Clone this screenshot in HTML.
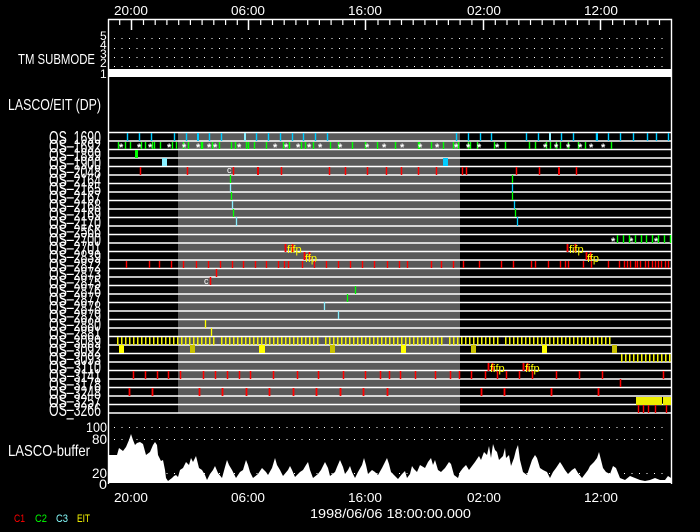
<!DOCTYPE html>
<html><head><meta charset="utf-8"><style>
html,body{margin:0;padding:0;background:#000;width:700px;height:532px;overflow:hidden}
svg{display:block}
text{font-family:"Liberation Sans",sans-serif;fill:#fff}
</style></head><body>
<svg width="700" height="532" viewBox="0 0 700 532" xmlns="http://www.w3.org/2000/svg">
<defs>
<pattern id="yt" x="117" y="0" width="4" height="10" patternUnits="userSpaceOnUse"><rect x="0" y="0" width="1.5" height="10" fill="#f0f000"/></pattern>
</defs>
<rect x="178" y="132" width="282" height="281" fill="#5a5a5a"/>
<path d="M108 19.5H671.5V484M108.5 19V484" stroke="#fff" stroke-width="1.4" fill="none"/>
<g stroke="#fff" stroke-width="1.2">
<path d="M119.7 20v5M143.5 20v5M155.2 20v5M166.9 20v5M178.7 20v5M190.4 20v5M202.1 20v5M213.8 20v5M225.6 20v5M237.3 20v5M260.7 20v5M272.5 20v5M284.2 20v5M295.9 20v5M307.7 20v5M319.4 20v5M331.1 20v5M342.8 20v5M354.6 20v5M378 20v5M389.8 20v5M401.5 20v5M413.2 20v5M424.9 20v5M436.7 20v5M448.4 20v5M460.1 20v5M471.9 20v5M495.3 20v5M507 20v5M518.8 20v5M530.5 20v5M542.2 20v5M554 20v5M565.7 20v5M577.4 20v5M589.1 20v5M612.6 20v5M624.3 20v5M636.1 20v5M647.8 20v5M659.5 20v5"/>
<path d="M131.5 20v10M248.5 20v10M365.5 20v10M483.5 20v10M600.5 20v10" stroke-width="1.5"/>
</g>
<g font-size="13">
<text x="131" y="15" text-anchor="middle" textLength="34" lengthAdjust="spacingAndGlyphs">20:00</text>
<text x="248" y="15" text-anchor="middle" textLength="34" lengthAdjust="spacingAndGlyphs">06:00</text>
<text x="365" y="15" text-anchor="middle" textLength="34" lengthAdjust="spacingAndGlyphs">16:00</text>
<text x="484" y="15" text-anchor="middle" textLength="34" lengthAdjust="spacingAndGlyphs">02:00</text>
<text x="601" y="15" text-anchor="middle" textLength="34" lengthAdjust="spacingAndGlyphs">12:00</text>
<text x="131" y="502" text-anchor="middle" textLength="34" lengthAdjust="spacingAndGlyphs">20:00</text>
<text x="248" y="502" text-anchor="middle" textLength="34" lengthAdjust="spacingAndGlyphs">06:00</text>
<text x="365" y="502" text-anchor="middle" textLength="34" lengthAdjust="spacingAndGlyphs">16:00</text>
<text x="484" y="502" text-anchor="middle" textLength="34" lengthAdjust="spacingAndGlyphs">02:00</text>
<text x="601" y="502" text-anchor="middle" textLength="34" lengthAdjust="spacingAndGlyphs">12:00</text>
<text x="310" y="518" textLength="161" lengthAdjust="spacingAndGlyphs">1998/06/06 18:00:00.000</text>
<text x="18" y="64" font-size="15" textLength="77" lengthAdjust="spacingAndGlyphs">TM SUBMODE</text>
<text x="8" y="110" font-size="16" textLength="93" lengthAdjust="spacingAndGlyphs">LASCO/EIT (DP)</text>
<text x="8" y="456" font-size="16" textLength="82" lengthAdjust="spacingAndGlyphs">LASCO-buffer</text>
<text x="86" y="432" font-size="14" textLength="21" lengthAdjust="spacingAndGlyphs">100</text>
<text x="92" y="444" font-size="14" textLength="15" lengthAdjust="spacingAndGlyphs">80</text>
<text x="92" y="478" font-size="14" textLength="15" lengthAdjust="spacingAndGlyphs">20</text>
<text x="99" y="489" font-size="14" textLength="8" lengthAdjust="spacingAndGlyphs">0</text>
</g>
<g font-size="11">
<text x="14" y="522" style="fill:#f00" textLength="11" lengthAdjust="spacingAndGlyphs">C1</text>
<text x="35" y="522" style="fill:#0f0" textLength="12" lengthAdjust="spacingAndGlyphs">C2</text>
<text x="56" y="522" style="fill:#8ff" textLength="12" lengthAdjust="spacingAndGlyphs">C3</text>
<text x="77" y="522" style="fill:#ff0" textLength="13" lengthAdjust="spacingAndGlyphs">EIT</text>
</g>
<g font-size="12">
<text x="100" y="40">5</text><text x="100" y="49">4</text><text x="100" y="58">3</text><text x="100" y="67">2</text><text x="100" y="78">1</text>
</g>
<g stroke="#fff" stroke-width="1" stroke-dasharray="1 6.5">
<path d="M114 38.5H668M114 48.5H668M114 57.5H668M114 66.5H668"/>
<path d="M114 427.5H668M114 439.5H668M114 473.5H668"/>
</g>
<rect x="108" y="69" width="564" height="8" fill="#fff"/>
<polygon fill="#fff" points="108,483 108,455 117,455 119,448 123,451 126,447 129,440 131,434 133,440 135,445 137,443 140,442 143,444 146,455 150,452 153,445 155,442 157,445 158,455 161,461 163,460 165,470 166,478 168,481 172,478 174,476 176,475 178,477 180,470 183,468 186,462 189,465 191,458 193,462 196,456 199,468 202,470 205,475 207,480 210,474 213,470 215,466 218,473 222,478 225,467 227,460 229,465 232,470 236,478 240,472 243,470 246,460 248,465 250,472 253,478 258,474 262,468 266,472 268,475 272,468 275,458 277,465 280,470 283,476 288,470 290,466 292,470 295,477 300,472 303,470 306,465 308,462 310,470 313,478 318,474 321,470 325,462 328,468 330,476 335,472 337,467 340,460 343,467 345,474 348,470 350,466 352,472 355,478 358,472 362,465 364,458 366,465 368,474 372,470 375,472 378,475 382,468 385,462 387,458 389,464 391,472 395,476 398,479 402,474 405,471 407,478 410,474 412,466 414,469 417,472 420,465 425,468 428,462 431,458 433,465 435,460 438,470 441,472 445,468 449,462 451,464 454,475 458,478 460,472 463,468 466,465 469,470 472,466 475,462 479,456 481,460 484,452 487,455 489,446 491,458 493,444 495,450 497,452 499,460 503,456 505,448 506,458 509,455 511,466 514,458 516,450 518,445 520,460 523,472 527,475 530,466 532,460 535,455 537,458 540,468 543,470 547,472 550,478 553,472 556,468 560,462 562,465 565,470 568,474 572,470 575,468 578,473 582,478 585,474 588,470 590,466 594,462 597,458 599,452 601,460 603,468 606,472 610,474 613,466 616,468 620,478 625,480 630,476 635,478 640,480 645,481 650,480 655,478 660,480 665,480 668,476 671,478 671,483"/>
<path stroke="#fff" stroke-width="1.5" fill="none" d="M108 132.5H671M108 141H671M108 149.5H671M108 158H671M108 166.5H671M108 175H671M108 183.5H671M108 192H671M108 200.5H671M108 209H671M108 217.5H671M108 226H671M108 234.5H671M108 243H671M108 251.5H671M108 260H671M108 268.5H671M108 277H671M108 285.5H671M108 294H671M108 302.5H671M108 311H671M108 319.5H671M108 328H671M108 336.5H671M108 345H671M108 353.5H671M108 362H671M108 370.5H671M108 379H671M108 387.5H671M108 396H671M108 404.5H671M108 413H671"/>
<path stroke="#0cf" stroke-width="1.4" d="M127.5 133v8M139.5 133v8M151.5 133v8M174.5 133v8M186.5 133v8M209.5 133v8M221.5 133v8M256.5 133v8M268.5 133v8M280.5 133v8M292.5 133v8M303.5 133v8M315.5 133v8M327.5 133v8M456.5 133v8M468.5 133v8M480.5 133v8M491.5 133v8M526.5 133v8M538.5 133v8M561.5 133v8M573.5 133v8M596.5 133v8M608.5 133v8M620.5 133v8M633.5 133v8M647.5 133v8M656.5 133v8M668.5 133v8"/>
<rect x="197" y="133" width="2" height="8" fill="#0cf"/><rect x="244" y="133" width="2" height="8" fill="#8ef"/><rect x="549" y="133" width="2" height="8" fill="#8ef"/><rect x="596" y="133" width="2" height="8" fill="#0cf"/>
<path stroke="#0f0" stroke-width="1.4" d="M118.5 142v7M125.5 142v7M130.5 142v7M141.5 142v7M145.5 142v7M152.5 142v7M154.5 142v7M160.5 142v7M172.5 142v7M176.5 142v7M183.5 142v7M188.5 142v7M201.5 142v7M202.5 142v7M212.5 142v7M219.5 142v7M231.5 142v7M235.5 142v7M246.5 142v7M248.5 142v7M254.5 142v7M266.5 142v7M283.5 142v7M289.5 142v7M301.5 142v7M305.5 142v7M313.5 142v7M330.5 142v7M338.5 142v7M352.5 142v7M365.5 142v7M377.5 142v7M395.5 142v7M418.5 142v7M419.5 142v7M431.5 142v7M443.5 142v7M453.5 142v7M458.5 142v7M468.5 142v7M470.5 142v7M477.5 142v7M494.5 142v7M505.5 142v7M529.5 142v7M535.5 142v7M546.5 142v7M550.5 142v7M556.5 142v7M560.5 142v7M568.5 142v7M578.5 142v7M585.5 142v7M611.5 142v7"/>
<g font-size="11" font-weight="bold">
<text x="119" y="151">*</text><text x="137" y="151">*</text><text x="148" y="151">*</text><text x="167" y="151">*</text><text x="182" y="151">*</text><text x="196" y="151">*</text><text x="207" y="151">*</text><text x="213" y="151">*</text><text x="237" y="151">*</text><text x="273" y="151">*</text><text x="284" y="151">*</text><text x="296" y="151">*</text><text x="307" y="151">*</text><text x="318" y="151">*</text><text x="338" y="151">*</text><text x="365" y="151">*</text><text x="382" y="151">*</text><text x="400" y="151">*</text><text x="418" y="151">*</text><text x="435" y="151">*</text><text x="454" y="151">*</text><text x="466" y="151">*</text><text x="477" y="151">*</text><text x="495" y="151">*</text><text x="543" y="151">*</text><text x="554" y="151">*</text><text x="566" y="151">*</text><text x="578" y="151">*</text><text x="589" y="151">*</text><text x="601" y="151">*</text>
<text x="611" y="245">*</text><text x="629" y="245">*</text><text x="654" y="245">*</text>
</g>
<path stroke="#0f0" stroke-width="1.4" d="M617.5 235v8M623.5 235v8M629.5 235v8M635.5 235v8M641.5 235v8M646.5 235v8M652.5 235v8M658.5 235v8M664.5 235v8M670.5 235v8"/>
<rect x="135" y="150" width="3" height="8" fill="#0f0"/>
<rect x="162" y="158" width="5" height="8" fill="#8ef"/>
<rect x="443" y="158" width="5" height="8" fill="#0cf"/>
<path stroke="#f00" stroke-width="1.5" d="M140.5 167v8M187.5 167v8M233.5 167v8M281.5 167v8M329.5 167v8M345.5 167v8M367.5 167v8M386.5 167v8M401.5 167v8M418.5 167v8M436.5 167v8M462.5 167v8M466.5 167v8M516.5 167v8M539.5 167v8M576.5 167v8"/>
<rect x="257" y="167" width="2" height="8" fill="#e00"/><rect x="558" y="167" width="2" height="8" fill="#e00"/>
<text x="227" y="173" font-size="9">c</text>
<path stroke-width="1.3" d="M230.5 175v8M231.5 192v8M233.5 209v8" stroke="#0f0"/>
<path stroke-width="1.3" d="M230.5 184v8M232.5 201v8M236.5 217v9" stroke="#8ef"/>
<path stroke-width="1.3" d="M512.5 175v8M512.5 192v8M515.5 209v8" stroke="#0f0"/>
<path stroke-width="1.3" d="M512.5 184v8M514.5 201v8M517.5 217v9" stroke="#0cf"/>
<path stroke="#f00" stroke-width="1.8" d="M285.5 244v8M292.5 244v8M304.5 252v8M309.5 252v8M567.5 244v8M575.5 244v8M586.5 252v8M590.5 252v8M488.5 363v8M492.5 363v8M523.5 363v8M527.5 363v8"/>
<g font-size="11">
<text x="287" y="253" style="fill:#ff0">fifp</text><text x="305" y="262" style="fill:#ff0">ffp</text>
<text x="569" y="253" style="fill:#ff0">fifp</text><text x="587" y="262" style="fill:#ff0">ffp</text>
<text x="490" y="372" style="fill:#ff0">fifp</text><text x="525" y="372" style="fill:#ff0">fifp</text>
</g>
<path stroke="#f00" stroke-width="1.4" d="M126.5 261v7M149.5 261v7M159.5 261v7M171.5 261v7M183.5 261v7M196.5 261v7M208.5 261v7M220.5 261v7M232.5 261v7M243.5 261v7M255.5 261v7M266.5 261v7M278.5 261v7M284.5 261v7M288.5 261v7M302.5 261v7M314.5 261v7M326.5 261v7M338.5 261v7M350.5 261v7M362.5 261v7M374.5 261v7M387.5 261v7M399.5 261v7M407.5 261v7M431.5 261v7M441.5 261v7M453.5 261v7M463.5 261v7M479.5 261v7M501.5 261v7M513.5 261v7M531.5 261v7M535.5 261v7M548.5 261v7M560.5 261v7M565.5 261v7M568.5 261v7M583.5 261v7M591.5 261v7M608.5 261v7M619.5 261v7M624.5 261v7M627.5 261v7M630.5 261v7M635.5 261v7M637.5 261v7M640.5 261v7M645.5 261v7M648.5 261v7M652.5 261v7M655.5 261v7M658.5 261v7M661.5 261v7M665.5 261v7M668.5 261v7"/>
<path stroke="#f00" stroke-width="1.5" d="M216.5 269v8M210.5 277v8M620.5 379v8"/>
<text x="204" y="284" font-size="9">c</text>
<path stroke="#0f0" stroke-width="1.3" d="M355.5 286v8M347.5 294v8"/>
<path stroke="#8ef" stroke-width="1.3" d="M324.5 302v8M338.5 311v8"/>
<path stroke="#ff0" stroke-width="1.3" d="M205.5 320v8M211.5 328v8"/>
<rect x="117" y="337" width="100" height="8" fill="url(#yt)"/>
<rect x="221" y="337" width="100" height="8" fill="url(#yt)"/>
<rect x="325" y="337" width="120" height="8" fill="url(#yt)"/>
<rect x="449" y="337" width="52" height="8" fill="url(#yt)"/>
<rect x="505" y="337" width="106" height="8" fill="url(#yt)"/>
<rect x="619" y="354" width="52" height="8" fill="url(#yt)"/>
<rect x="119" y="345" width="5" height="8" fill="#ff0"/><rect x="190" y="345" width="5" height="8" fill="#c8c000"/><rect x="259" y="345" width="6" height="8" fill="#ff0"/><rect x="330" y="345" width="5" height="8" fill="#c8c000"/><rect x="401" y="345" width="5" height="8" fill="#ff0"/><rect x="471" y="345" width="5" height="8" fill="#c8c000"/><rect x="542" y="345" width="5" height="8" fill="#ff0"/><rect x="612" y="345" width="5" height="8" fill="#c8c000"/>
<path stroke="#f00" stroke-width="1.5" d="M133.5 371v8M145.5 371v8M157.5 371v8M168.5 371v8M180.5 371v8M203.5 371v8M215.5 371v8M227.5 371v8M239.5 371v8M250.5 371v8M273.5 371v8M297.5 371v8M318.5 371v8M343.5 371v8M365.5 371v8M380.5 371v8M389.5 371v8M400.5 371v8M415.5 371v8M435.5 371v8M450.5 371v8M459.5 371v8M471.5 371v8M485.5 371v8M497.5 371v8M506.5 371v8M519.5 371v8M532.5 371v8M556.5 371v8M579.5 371v8M602.5 371v8M663.5 371v8"/>
<path stroke="#f00" stroke-width="1.8" d="M129.5 388v8M152.5 388v8M199.5 388v8M222.5 388v8M246.5 388v8M269.5 388v8M293.5 388v8M316.5 388v8M340.5 388v8M363.5 388v8M387.5 388v8M481.5 388v8M504.5 388v8M551.5 388v8M598.5 388v8"/>
<rect x="636" y="397" width="26" height="8" fill="#ee0"/><rect x="663" y="397" width="8" height="8" fill="#ee0"/>
<path stroke="#f00" stroke-width="1.4" d="M638.5 405v8M643.5 405v8M648.5 405v8M655.5 405v8M666.5 405v8"/>
<g font-size="18">
<text x="101" y="144" text-anchor="end" textLength="52" lengthAdjust="spacingAndGlyphs">OS_1690</text>
<text x="101" y="152.5" text-anchor="end" textLength="52" lengthAdjust="spacingAndGlyphs">OS_1692</text>
<text x="101" y="161" text-anchor="end" textLength="52" lengthAdjust="spacingAndGlyphs">OS_1899</text>
<text x="101" y="169.5" text-anchor="end" textLength="52" lengthAdjust="spacingAndGlyphs">OS_1900</text>
<text x="101" y="178" text-anchor="end" textLength="52" lengthAdjust="spacingAndGlyphs">OS_2048</text>
<text x="101" y="186.5" text-anchor="end" textLength="52" lengthAdjust="spacingAndGlyphs">OS_2164</text>
<text x="101" y="195" text-anchor="end" textLength="52" lengthAdjust="spacingAndGlyphs">OS_2165</text>
<text x="101" y="203.5" text-anchor="end" textLength="52" lengthAdjust="spacingAndGlyphs">OS_2167</text>
<text x="101" y="212" text-anchor="end" textLength="52" lengthAdjust="spacingAndGlyphs">OS_2168</text>
<text x="101" y="220.5" text-anchor="end" textLength="52" lengthAdjust="spacingAndGlyphs">OS_2169</text>
<text x="101" y="229" text-anchor="end" textLength="52" lengthAdjust="spacingAndGlyphs">OS_2170</text>
<text x="101" y="237.5" text-anchor="end" textLength="52" lengthAdjust="spacingAndGlyphs">OS_2566</text>
<text x="101" y="246" text-anchor="end" textLength="52" lengthAdjust="spacingAndGlyphs">OS_2700</text>
<text x="101" y="254.5" text-anchor="end" textLength="52" lengthAdjust="spacingAndGlyphs">OS_2701</text>
<text x="101" y="263" text-anchor="end" textLength="52" lengthAdjust="spacingAndGlyphs">OS_2839</text>
<text x="101" y="271.5" text-anchor="end" textLength="52" lengthAdjust="spacingAndGlyphs">OS_2872</text>
<text x="101" y="280" text-anchor="end" textLength="52" lengthAdjust="spacingAndGlyphs">OS_2873</text>
<text x="101" y="288.5" text-anchor="end" textLength="52" lengthAdjust="spacingAndGlyphs">OS_2875</text>
<text x="101" y="297" text-anchor="end" textLength="52" lengthAdjust="spacingAndGlyphs">OS_2876</text>
<text x="101" y="305.5" text-anchor="end" textLength="52" lengthAdjust="spacingAndGlyphs">OS_2877</text>
<text x="101" y="314" text-anchor="end" textLength="52" lengthAdjust="spacingAndGlyphs">OS_2878</text>
<text x="101" y="322.5" text-anchor="end" textLength="52" lengthAdjust="spacingAndGlyphs">OS_2879</text>
<text x="101" y="331" text-anchor="end" textLength="52" lengthAdjust="spacingAndGlyphs">OS_2880</text>
<text x="101" y="339.5" text-anchor="end" textLength="52" lengthAdjust="spacingAndGlyphs">OS_2881</text>
<text x="101" y="348" text-anchor="end" textLength="52" lengthAdjust="spacingAndGlyphs">OS_3089</text>
<text x="101" y="356.5" text-anchor="end" textLength="52" lengthAdjust="spacingAndGlyphs">OS_3092</text>
<text x="101" y="365" text-anchor="end" textLength="52" lengthAdjust="spacingAndGlyphs">OS_3093</text>
<text x="101" y="373.5" text-anchor="end" textLength="52" lengthAdjust="spacingAndGlyphs">OS_3110</text>
<text x="101" y="382" text-anchor="end" textLength="52" lengthAdjust="spacingAndGlyphs">OS_3141</text>
<text x="101" y="390.5" text-anchor="end" textLength="52" lengthAdjust="spacingAndGlyphs">OS_3178</text>
<text x="101" y="399" text-anchor="end" textLength="52" lengthAdjust="spacingAndGlyphs">OS_3248</text>
<text x="101" y="407.5" text-anchor="end" textLength="52" lengthAdjust="spacingAndGlyphs">OS_3257</text>
<text x="101" y="416" text-anchor="end" textLength="52" lengthAdjust="spacingAndGlyphs">OS_3266</text>
</g>
</svg>
</body></html>
